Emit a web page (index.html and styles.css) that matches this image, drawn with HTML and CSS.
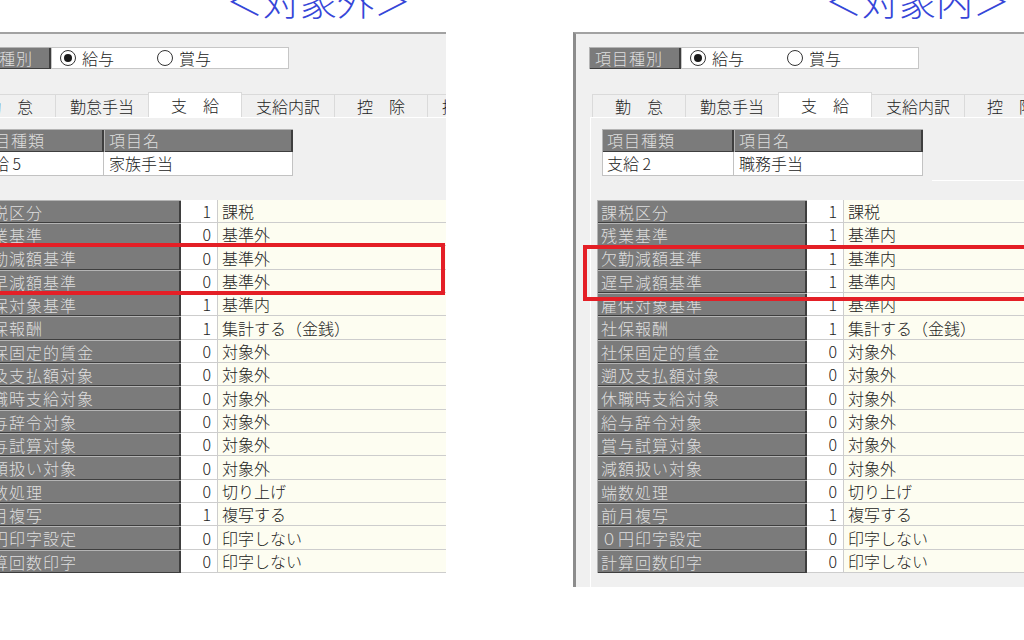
FILE: index.html
```html
<!DOCTYPE html>
<html lang="ja">
<head>
  <meta charset="UTF-8" />
  <title>項目設定</title>
  <link rel="stylesheet" href="styles.css">
</head>
<body>

  <div class="stage">

    <!-- 家族手当: 対象外 -->
    <section class="shot shot--left">
      <div class="title"><span>＜対象外＞</span></div>
      <div class="window">
        <div class="kind-row">
          <div class="bevel kind-label">項目種別</div>
          <div class="kind-choices">
            <label class="option"><span class="radio radio--on"></span>給与</label>
            <label class="option"><span class="radio"></span>賞与</label>
          </div>
        </div>

        <div class="tabs">
          <div class="tab">勤　怠</div>
          <div class="tab">勤怠手当</div>
          <div class="tab tab--active">支　給</div>
          <div class="tab">支給内訳</div>
          <div class="tab">控　除</div>
          <div class="tab">控除内訳</div>
        </div>

        <div class="tab-page">
          <div class="item-head">
            <div class="bevel head-cell">項目種類</div>
            <div class="bevel head-cell">項目名</div>
            <div class="head-value">支給 5</div>
            <div class="head-value">家族手当</div>
          </div>

          <div class="props">
            <div class="prop"><div class="bevel prop-label">課税区分</div><div class="prop-num">1</div><div class="prop-value">課税</div></div>
            <div class="prop"><div class="bevel prop-label">残業基準</div><div class="prop-num">0</div><div class="prop-value">基準外</div></div>
            <div class="prop"><div class="bevel prop-label">欠勤減額基準</div><div class="prop-num">0</div><div class="prop-value">基準外</div></div>
            <div class="prop"><div class="bevel prop-label">遅早減額基準</div><div class="prop-num">0</div><div class="prop-value">基準外</div></div>
            <div class="prop"><div class="bevel prop-label">雇保対象基準</div><div class="prop-num">1</div><div class="prop-value">基準内</div></div>
            <div class="prop"><div class="bevel prop-label">社保報酬</div><div class="prop-num">1</div><div class="prop-value">集計する（金銭）</div></div>
            <div class="prop"><div class="bevel prop-label">社保固定的賃金</div><div class="prop-num">0</div><div class="prop-value">対象外</div></div>
            <div class="prop"><div class="bevel prop-label">遡及支払額対象</div><div class="prop-num">0</div><div class="prop-value">対象外</div></div>
            <div class="prop"><div class="bevel prop-label">休職時支給対象</div><div class="prop-num">0</div><div class="prop-value">対象外</div></div>
            <div class="prop"><div class="bevel prop-label">給与辞令対象</div><div class="prop-num">0</div><div class="prop-value">対象外</div></div>
            <div class="prop"><div class="bevel prop-label">賞与試算対象</div><div class="prop-num">0</div><div class="prop-value">対象外</div></div>
            <div class="prop"><div class="bevel prop-label">減額扱い対象</div><div class="prop-num">0</div><div class="prop-value">対象外</div></div>
            <div class="prop"><div class="bevel prop-label">端数処理</div><div class="prop-num">0</div><div class="prop-value">切り上げ</div></div>
            <div class="prop"><div class="bevel prop-label">前月複写</div><div class="prop-num">1</div><div class="prop-value">複写する</div></div>
            <div class="prop"><div class="bevel prop-label">０円印字設定</div><div class="prop-num">0</div><div class="prop-value">印字しない</div></div>
            <div class="prop"><div class="bevel prop-label">計算回数印字</div><div class="prop-num">0</div><div class="prop-value">印字しない</div></div>
          </div>
        </div>
      </div>
      <div class="mark"></div>
    </section>

    <!-- 職務手当: 対象内 -->
    <section class="shot shot--right">
      <div class="title"><span>＜対象内＞</span></div>
      <div class="window">
        <div class="kind-row">
          <div class="bevel kind-label">項目種別</div>
          <div class="kind-choices">
            <label class="option"><span class="radio radio--on"></span>給与</label>
            <label class="option"><span class="radio"></span>賞与</label>
          </div>
        </div>

        <div class="tabs">
          <div class="tab">勤　怠</div>
          <div class="tab">勤怠手当</div>
          <div class="tab tab--active">支　給</div>
          <div class="tab">支給内訳</div>
          <div class="tab">控　除</div>
          <div class="tab">控除内訳</div>
        </div>

        <div class="tab-page">
          <div class="item-head">
            <div class="bevel head-cell">項目種類</div>
            <div class="bevel head-cell">項目名</div>
            <div class="head-value">支給 2</div>
            <div class="head-value">職務手当</div>
          </div>
          <div class="head-rule"></div>

          <div class="props">
            <div class="prop"><div class="bevel prop-label">課税区分</div><div class="prop-num">1</div><div class="prop-value">課税</div></div>
            <div class="prop"><div class="bevel prop-label">残業基準</div><div class="prop-num">1</div><div class="prop-value">基準内</div></div>
            <div class="prop"><div class="bevel prop-label">欠勤減額基準</div><div class="prop-num">1</div><div class="prop-value">基準内</div></div>
            <div class="prop"><div class="bevel prop-label">遅早減額基準</div><div class="prop-num">1</div><div class="prop-value">基準内</div></div>
            <div class="prop"><div class="bevel prop-label">雇保対象基準</div><div class="prop-num">1</div><div class="prop-value">基準内</div></div>
            <div class="prop"><div class="bevel prop-label">社保報酬</div><div class="prop-num">1</div><div class="prop-value">集計する（金銭）</div></div>
            <div class="prop"><div class="bevel prop-label">社保固定的賃金</div><div class="prop-num">0</div><div class="prop-value">対象外</div></div>
            <div class="prop"><div class="bevel prop-label">遡及支払額対象</div><div class="prop-num">0</div><div class="prop-value">対象外</div></div>
            <div class="prop"><div class="bevel prop-label">休職時支給対象</div><div class="prop-num">0</div><div class="prop-value">対象外</div></div>
            <div class="prop"><div class="bevel prop-label">給与辞令対象</div><div class="prop-num">0</div><div class="prop-value">対象外</div></div>
            <div class="prop"><div class="bevel prop-label">賞与試算対象</div><div class="prop-num">0</div><div class="prop-value">対象外</div></div>
            <div class="prop"><div class="bevel prop-label">減額扱い対象</div><div class="prop-num">0</div><div class="prop-value">対象外</div></div>
            <div class="prop"><div class="bevel prop-label">端数処理</div><div class="prop-num">0</div><div class="prop-value">切り上げ</div></div>
            <div class="prop"><div class="bevel prop-label">前月複写</div><div class="prop-num">1</div><div class="prop-value">複写する</div></div>
            <div class="prop"><div class="bevel prop-label">０円印字設定</div><div class="prop-num">0</div><div class="prop-value">印字しない</div></div>
            <div class="prop"><div class="bevel prop-label">計算回数印字</div><div class="prop-num">0</div><div class="prop-value">印字しない</div></div>
          </div>
        </div>
      </div>
      <div class="mark"></div>
    </section>

  </div>

</body>
</html>
```

FILE: styles.css
```css
* {
  box-sizing: border-box;
}

html, body {
  margin: 0;
}

body {
  width: 1024px;
  height: 640px;
  overflow: hidden;
  background: #fff;
  font-family: "Noto Sans CJK JP", "Noto Sans", sans-serif;
  font-size: 16px;
  font-weight: 300;
  color: #222;
}

.stage {
  display: flex;
  align-items: flex-start;
}

/* one captured window with its caption */
.shot {
  position: relative;
  flex: none;
  width: 499px;
  overflow: hidden;
}

.shot--left {
  margin-left: -53px;
  height: 573px;
}

.shot--right {
  margin-left: 127px;
  height: 587px;
}

.title {
  display: flow-root;
  height: 32px;
  color: #3646d8;
  font-size: 37px;
  line-height: 36px;
  white-space: nowrap;
}

.title span {
  display: block;
  margin-top: -18px;
}

.shot--left .title { padding-left: 279px; }
.shot--right .title { padding-left: 252px; }

.window {
  height: 555px;
  background: #f0f0f0;
  border-top: 2px solid #a2a2a2;
  border-left: 3px solid #8c8c8c;
  padding: 13px 0 0 13px;
}

/* dark raised caption cells */
.bevel {
  background: #7b7b7b;
  color: #dedede;
  letter-spacing: 1px;
  box-shadow: inset 1px 1px 0 #b4b4b4, inset -2px -1px 0 #3e3e3e;
  white-space: nowrap;
}

.kind-row {
  display: flex;
  height: 22px;
}

.kind-label {
  width: 92px;
  padding-left: 6px;
  line-height: 22px;
}

.kind-choices {
  width: 238px;
  display: flex;
  align-items: center;
  padding-left: 8px;
  background: #fff;
  border: 1px solid #c6c6c6;
}

.option {
  width: 97px;
  display: flex;
  align-items: center;
  gap: 6px;
  line-height: 20px;
}

.radio {
  width: 16px;
  height: 16px;
  border: 1px solid #333;
  border-radius: 50%;
  background: #fff;
  display: flex;
  align-items: center;
  justify-content: center;
}

.radio--on::after {
  content: "";
  width: 8px;
  height: 8px;
  border-radius: 50%;
  background: #1a1a1a;
}

.tabs {
  display: flex;
  align-items: flex-end;
  height: 25px;
  margin: 23px 0 0 3px;
}

.tab {
  flex: none;
  width: 94px;
  height: 23px;
  margin-right: -1px;
  line-height: 22px;
  text-align: center;
  background: #f0f0f0;
  border: 1px solid #dadada;
  border-bottom: none;
  white-space: nowrap;
}

.tab--active {
  position: relative;
  z-index: 1;
  height: 25px;
  line-height: 24px;
  background: #fff;
}

.tab-page {
  margin-left: 1px;
  height: 470px;
  border-top: 1px solid #fff;
  border-left: 1px solid #fff;
  padding: 11px 0 0 0;
}

.item-head {
  display: grid;
  grid-template-columns: 132px 189px;
  grid-template-rows: 23px 24px;
  width: 321px;
  margin-left: 11px;
}

.head-cell {
  padding-left: 5px;
  line-height: 23px;
}

.head-value {
  background: #fff;
  border: 1px solid #c2c2c2;
  border-top: none;
  padding-left: 4px;
  line-height: 22px;
  white-space: nowrap;
}

.head-value + .head-value {
  border-left: none;
  padding-left: 5px;
}

.head-rule {
  height: 1px;
  margin: 4px 0 0 341px;
  background: #fff;
}

.shot--left .kind-row { margin-left: -4px; }
.shot--left .tabs { margin-left: -1px; }
.shot--left .item-head { margin-left: 7px; }

.props {
  margin: 24px 0 0 6px;
}

.shot--right .props {
  margin-top: 19px;
}

.prop {
  display: flex;
  height: 23px;
}

.prop:nth-child(3n) {
  height: 24px;
}

.prop-label {
  flex: none;
  width: 210px;
  padding-left: 4px;
  display: flex;
  align-items: center;
}

.prop-num {
  flex: none;
  width: 36px;
  background: #fff;
  border-bottom: 1px solid #cdcdcd;
  text-align: right;
  padding-right: 6px;
  display: flex;
  align-items: center;
  justify-content: flex-end;
}

.prop-value {
  flex: none;
  width: 240px;
  background: #fdfdf1;
  border-left: 1px solid #cdcdcd;
  border-bottom: 1px solid #cdcdcd;
  padding-left: 4px;
  display: flex;
  align-items: center;
  white-space: nowrap;
}

/* red highlight over the absence rows */
.mark {
  position: absolute;
  border: 4px solid #e41f26;
}

.shot--left .mark {
  left: 40px;
  top: 243px;
  width: 458px;
  height: 52px;
}

.shot--right .mark {
  left: 10px;
  top: 245px;
  width: 600px;
  height: 56px;
}
```
